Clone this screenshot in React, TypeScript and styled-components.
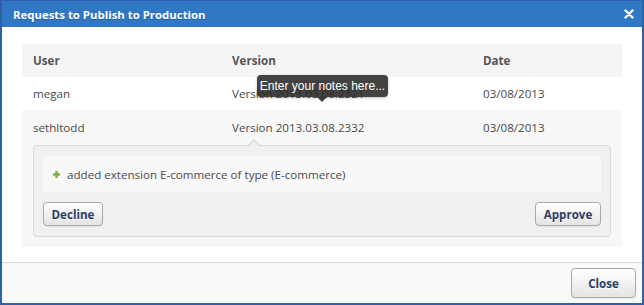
import React from "react";
import styled, { createGlobalStyle } from "styled-components";

const GlobalStyle = createGlobalStyle`
  html, body {
    margin: 0;
    padding: 0;
    background: #ffffff;
  }
  body {
    font-family: "Open Sans", "DejaVu Sans", sans-serif;
    font-size: 11.6px;
    color: #4a4a4a;
  }
  * {
    box-sizing: border-box;
  }
`;

const DialogWindow = styled.div`
  width: 644px;
  height: 305px;
  border: 2px solid #2f60a8;
  border-top-width: 1px;
  display: flex;
  flex-direction: column;
  background: #ffffff;
  position: relative;
`;

const TitleBar = styled.div`
  height: 26px;
  background: #3077c4;
  display: flex;
  align-items: center;
  justify-content: space-between;
  padding: 0 8px 0 11px;
  color: #ffffff;
`;

const Title = styled.span`
  font-weight: bold;
  font-size: 11.4px;
  text-shadow: 0 1px 0 rgba(0, 0, 0, 0.2);
`;

const CloseIcon = styled.svg`
  width: 10px;
  height: 10px;
  display: block;
`;

const Body = styled.div`
  flex: 1;
  padding: 17px 20px 15px;
`;

const Panel = styled.div`
  background: #f7f7f7;
  padding-bottom: 10px;
  position: relative;
`;

const Row = styled.div<{ $bg: string; $height?: number }>`
  display: grid;
  grid-template-columns: 199px 251px 1fr;
  align-items: center;
  height: ${(p) => p.$height ?? 33}px;
  padding-left: 11px;
  background: ${(p) => p.$bg};
`;

const HeadCell = styled.span`
  font-weight: bold;
  color: #555555;
`;

const Cell = styled.span`
  color: #4a4a4a;
`;

const Details = styled.div`
  margin: 0 11px;
  background: #f0f0f0;
  border: 1px solid #d9d9d9;
  border-radius: 4px;
  padding: 10px 9px 10px;
  position: relative;

  &::before {
    content: "";
    position: absolute;
    top: -7px;
    left: 214px;
    border: 6px solid transparent;
    border-top: 0;
    border-bottom: 6px solid #dcdcdc;
  }
  &::after {
    content: "";
    position: absolute;
    top: -5px;
    left: 215px;
    border: 5px solid transparent;
    border-top: 0;
    border-bottom: 5px solid #f0f0f0;
  }
`;

const Note = styled.div`
  background: #f8f8f8;
  height: 36px;
  display: flex;
  align-items: center;
  gap: 7px;
  padding-left: 10px;
  color: #4a4a4a;
`;

const PlusIcon = styled.svg`
  width: 7px;
  height: 7px;
  display: block;
`;

const ActionRow = styled.div`
  display: flex;
  justify-content: space-between;
  margin-top: 10px;
`;

const Button = styled.button<{ $width: number; $height: number }>`
  width: ${(p) => p.$width}px;
  height: ${(p) => p.$height}px;
  font-family: "Open Sans", "DejaVu Sans", sans-serif;
  font-size: 11.6px;
  font-weight: bold;
  color: #2b3d63;
  background: linear-gradient(#ffffff, #e4e4e4);
  border: 1px solid #a9a9a9;
  border-radius: 4px;
  padding: 0;
  text-shadow: 0 1px 0 #ffffff;
  box-shadow: 0 1px 1px rgba(0, 0, 0, 0.06);
`;

const Tooltip = styled.div`
  position: absolute;
  left: 235px;
  top: 31px;
  width: 131px;
  height: 22px;
  background: rgba(40, 40, 40, 0.88);
  border-radius: 4px;
  color: #ffffff;
  font-family: "Liberation Sans", Arial, sans-serif;
  font-size: 12px;
  display: flex;
  align-items: center;
  justify-content: center;
  box-shadow: 0 1px 3px rgba(0, 0, 0, 0.25);

  &::after {
    content: "";
    position: absolute;
    bottom: -5px;
    left: 60px;
    border: 5px solid transparent;
    border-bottom: 0;
    border-top: 5px solid rgba(40, 40, 40, 0.88);
  }
`;

const Footer = styled.div`
  height: 41px;
  border-top: 1px solid #d6d6d6;
  background: #f9f9f9;
  display: flex;
  justify-content: flex-end;
  align-items: center;
  padding-right: 6px;
`;

const rows = [
  { user: "megan", version: "Version 2013.03.08.2321", date: "03/08/2013", bg: "#ffffff" },
  { user: "sethltodd", version: "Version 2013.03.08.2332", date: "03/08/2013", bg: "#f7f7f7" },
];

export default function App() {
  return (
    <>
      <GlobalStyle />
      <DialogWindow>
        <TitleBar>
          <Title>Requests to Publish to Production</Title>
          <CloseIcon viewBox="0 0 10 10">
            <path d="M1.5 1.5 L8.5 8.5 M8.5 1.5 L1.5 8.5" stroke="#ffffff" strokeWidth="2.4" strokeLinecap="round" />
          </CloseIcon>
        </TitleBar>
        <Body>
          <Panel>
            <Row $bg="#f5f5f5">
              <HeadCell>User</HeadCell>
              <HeadCell>Version</HeadCell>
              <HeadCell>Date</HeadCell>
            </Row>
            {rows.map((r) => (
              <Row key={r.user} $bg={r.bg} $height={r.user === "megan" ? 33 : 35}>
                <Cell>{r.user}</Cell>
                <Cell>{r.version}</Cell>
                <Cell>{r.date}</Cell>
              </Row>
            ))}
            <Details>
              <Note>
                <PlusIcon viewBox="0 0 7 7">
                  <path d="M3.5 0 V7 M0 3.5 H7" stroke="#7bb23c" strokeWidth="2.4" />
                </PlusIcon>
                added extension E-commerce of type (E-commerce)
              </Note>
              <ActionRow>
                <Button $width={60} $height={24}>Decline</Button>
                <Button $width={66} $height={24}>Approve</Button>
              </ActionRow>
            </Details>
            <Tooltip>Enter your notes here...</Tooltip>
          </Panel>
        </Body>
        <Footer>
          <Button $width={65} $height={30}>Close</Button>
        </Footer>
      </DialogWindow>
    </>
  );
}
